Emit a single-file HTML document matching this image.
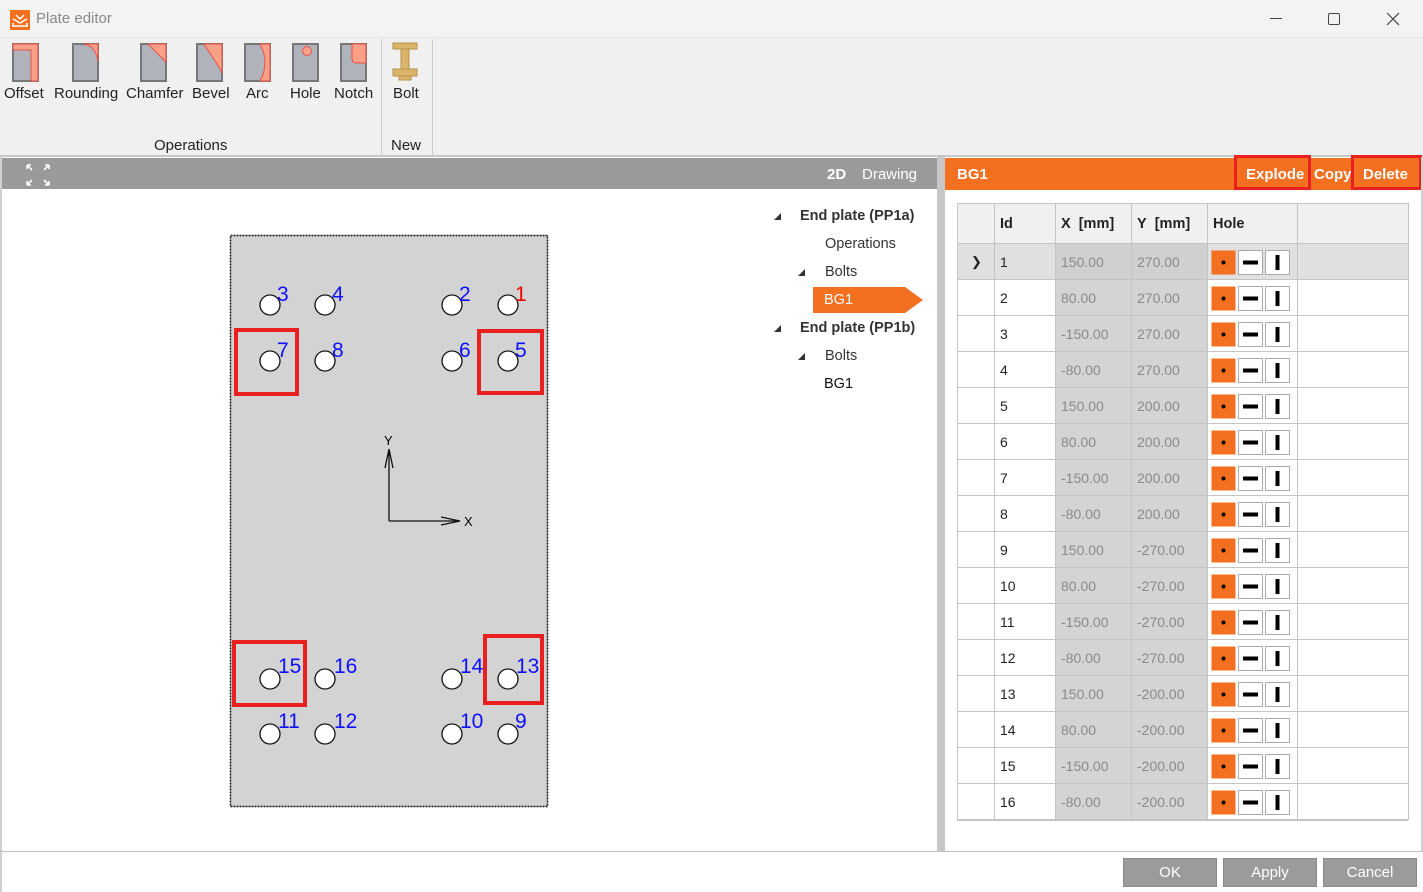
<!DOCTYPE html>
<html><head><meta charset="utf-8"><style>
*{margin:0;padding:0;box-sizing:border-box}
body{width:1423px;height:892px;overflow:hidden;background:#fff;font-family:"Liberation Sans",sans-serif;position:relative;font-size:14px;color:#222}
.a{position:absolute}
.tb{left:0;top:0;width:1423px;height:38px;background:#f3f3f3;border-bottom:1px solid #e4e4e4}
.rb{left:0;top:38px;width:1423px;height:119px;background:#f0f0f0;border-bottom:2px solid #c8c8c8}
.lbl{font-size:15px;color:#222;text-align:center}
table{border-collapse:collapse;position:absolute;left:957px;top:203px;table-layout:fixed}
td{border:1px solid #c4c4c4;height:36px;font-size:14px;padding-left:5px;color:#222}
td.g{background:#d4d4d4;color:#8a8a8a}
tr.h td{height:40px;font-weight:bold;background:#f0f0f0;font-size:14.5px}
tr.s td{background:#e0e0e0}
tr.s td.g{background:#d0d0d0}
.btn{top:858px;width:94px;height:29px;background:#9b9b9b;border:1px solid #8a8a8a;color:#fff;font-size:15px;text-align:center;line-height:28px}
</style></head><body>
<div class="a tb"></div>
<div class="a" style="left:10px;top:10px;width:20px;height:20px;background:#f37021"></div>
<svg class="a" style="left:10px;top:10px" width="20" height="20"><path d="M3 9 L10 13 L17 9 M3 13 V16 H17 V13 M6 5 L10 9 L14 5" stroke="#fff" stroke-width="1.5" fill="none"/></svg>
<div class="a" style="left:36px;top:10px;font-size:15px;color:#888">Plate editor</div>
<div class="a" style="left:1270px;top:18px;width:12px;height:1px;background:#444"></div>
<div class="a" style="left:1328px;top:13px;width:12px;height:12px;border:1px solid #444;border-radius:2px"></div>
<svg class="a" style="left:1386px;top:12px" width="14" height="14"><path d="M1 1L13 13M13 1L1 13" stroke="#444" stroke-width="1.2"/></svg>
<div class="a rb"></div>
<svg class="a" style="left:0;top:38px" width="440" height="60">
<g stroke="#777" stroke-width="2" fill="#b0b2bc">
<rect x="13" y="6" width="25" height="37"/><rect x="73" y="6" width="25" height="37"/><rect x="141" y="6" width="25" height="37"/><rect x="197" y="6" width="25" height="37"/><rect x="245" y="6" width="25" height="37"/><rect x="293" y="6" width="25" height="37"/><rect x="341" y="6" width="25" height="37"/></g>
<g fill="#f9a086" stroke="#e8534a" stroke-width="1">
<path d="M13 6H38V43H31V12H13Z"/><path d="M84 6H98V24Q96 8 84 6Z"/><path d="M148 6H166V24Z"/><path d="M204 6H222V34Z"/><path d="M260 6H270V43H260Q270 25 260 6Z"/><circle cx="307" cy="13" r="4.5"/><path d="M352 6H366V25H356Q352 25 352 20Z"/></g>
<g fill="#d9b46a" stroke="#b8944a"><rect x="393" y="5" width="24" height="6"/><rect x="401" y="11" width="8" height="22"/><rect x="393" y="31" width="24" height="7"/><rect x="399" y="38" width="12" height="4"/></g>
</svg>
<div class="a lbl" style="left:4px;top:85px">Offset</div>
<div class="a lbl" style="left:54px;top:85px">Rounding</div>
<div class="a lbl" style="left:126px;top:85px">Chamfer</div>
<div class="a lbl" style="left:192px;top:85px">Bevel</div>
<div class="a lbl" style="left:246px;top:85px">Arc</div>
<div class="a lbl" style="left:290px;top:85px">Hole</div>
<div class="a lbl" style="left:334px;top:85px">Notch</div>
<div class="a lbl" style="left:393px;top:85px">Bolt</div>
<div class="a" style="left:381px;top:39px;width:1px;height:117px;background:#ccc"></div>
<div class="a" style="left:432px;top:39px;width:1px;height:117px;background:#ccc"></div>
<div class="a lbl" style="left:154px;top:137px">Operations</div>
<div class="a lbl" style="left:391px;top:137px">New</div>
<div class="a" style="left:0;top:157px;width:2px;height:735px;background:#d0d0d0"></div>
<div class="a" style="left:2px;top:158px;width:935px;height:31px;background:#9a9a9a"></div>
<svg class="a" style="left:24px;top:162px" width="28" height="26"><g stroke="#fff" stroke-width="1.6" fill="none"><path d="M3 3L8 8M3 3H7M3 3V7M25 3L20 8M25 3H21M25 3V7M3 23L8 18M3 23H7M3 23V19M25 23L20 18M25 23H21M25 23V19"/></g></svg>
<div class="a" style="left:827px;top:166px;color:#fff;font-weight:bold;font-size:15px">2D</div>
<div class="a" style="left:862px;top:166px;color:#fff;font-size:15px">Drawing</div>
<div class="a" style="left:937px;top:157px;width:8px;height:694px;background:#c8c8c8"></div>
<svg class="a" style="left:0;top:0" width="940" height="850">
<rect x="230.5" y="235.5" width="317" height="571" fill="#d3d3d3" stroke="#111" stroke-width="1.5" stroke-dasharray="2 1"/>
<g fill="#fff" stroke="#111" stroke-width="1.3">
<circle cx="270" cy="305" r="10"/><circle cx="325" cy="305" r="10"/><circle cx="452" cy="305" r="10"/><circle cx="508" cy="305" r="10"/>
<circle cx="270" cy="361" r="10"/><circle cx="325" cy="361" r="10"/><circle cx="452" cy="361" r="10"/><circle cx="508" cy="361" r="10"/>
<circle cx="270" cy="679" r="10"/><circle cx="325" cy="679" r="10"/><circle cx="452" cy="679" r="10"/><circle cx="508" cy="679" r="10"/>
<circle cx="270" cy="734" r="10"/><circle cx="325" cy="734" r="10"/><circle cx="452" cy="734" r="10"/><circle cx="508" cy="734" r="10"/></g>
<g font-family="Liberation Sans,sans-serif" font-size="21" fill="#1010ff">
<text x="277" y="301">3</text><text x="332" y="301">4</text><text x="459" y="301">2</text><text x="515" y="301" fill="#f00000">1</text>
<text x="277" y="357">7</text><text x="332" y="357">8</text><text x="459" y="357">6</text><text x="515" y="357">5</text>
<text x="278" y="673">15</text><text x="334" y="673">16</text><text x="460" y="673">14</text><text x="516" y="673">13</text>
<text x="278" y="728">11</text><text x="334" y="728">12</text><text x="460" y="728">10</text><text x="515" y="728">9</text></g>
<g stroke="#111" stroke-width="1.3" fill="none"><path d="M389 521V449M385 468L389 449L393 468M389 521H460M441 517L460 521L441 525"/></g>
<text x="384" y="445" font-size="13" font-family="Liberation Sans,sans-serif">Y</text>
<text x="464" y="526" font-size="13" font-family="Liberation Sans,sans-serif">X</text>
<g fill="none" stroke="#e8201f" stroke-width="4"><rect x="236" y="330" width="61" height="64"/><rect x="479" y="331" width="63" height="62"/><rect x="234" y="642" width="71" height="63"/><rect x="485" y="636" width="57" height="67"/></g>
<g fill="#333"><path d="M774 220L781 213V220Z"/><path d="M798 276L805 269V276Z"/><path d="M774 332L781 325V332Z"/><path d="M798 360L805 353V360Z"/></g>
<path d="M813 287H905L923 300L905 313H813Z" fill="#f37021"/>
</svg>
<div class="a" style="left:800px;top:208px;font-weight:bold;font-size:14.5px;color:#333">End plate (PP1a)</div>
<div class="a" style="left:825px;top:236px;font-size:14.5px;color:#333">Operations</div>
<div class="a" style="left:825px;top:264px;font-size:14.5px;color:#333">Bolts</div>
<div class="a" style="left:824px;top:292px;font-size:14.5px;color:#fff">BG1</div>
<div class="a" style="left:800px;top:320px;font-weight:bold;font-size:14.5px;color:#333">End plate (PP1b)</div>
<div class="a" style="left:825px;top:348px;font-size:14.5px;color:#333">Bolts</div>
<div class="a" style="left:824px;top:376px;font-size:14.5px;color:#111">BG1</div>
<div class="a" style="left:945px;top:158px;width:476px;height:32px;background:#f37021"></div>
<div class="a" style="left:957px;top:166px;color:#fff;font-weight:bold;font-size:15px">BG1</div>
<div class="a" style="left:1234px;top:155px;width:77px;height:35px;border:3px solid #e8201f"></div>
<div class="a" style="left:1246px;top:166px;color:#fff;font-weight:bold;font-size:15px">Explode</div>
<div class="a" style="left:1314px;top:166px;color:#fff;font-weight:bold;font-size:15px">Copy</div>
<div class="a" style="left:1351px;top:155px;width:71px;height:35px;border:3px solid #e8201f"></div>
<div class="a" style="left:1363px;top:166px;color:#fff;font-weight:bold;font-size:15px">Delete</div>
<div class="a" style="left:1421px;top:157px;width:2px;height:694px;background:#d0d0d0"></div>
<table>
<colgroup><col style="width:37px"><col style="width:61px"><col style="width:76px"><col style="width:76px"><col style="width:90px"><col style="width:111px"></colgroup>
<tr class="h"><td></td><td>Id</td><td>X&nbsp; [mm]</td><td>Y&nbsp; [mm]</td><td>Hole</td><td></td></tr>
<tr class="s"><td style="padding-left:13px;font-size:13px">&#x276F;</td><td>1</td><td class="g">150.00</td><td class="g">270.00</td><td></td><td></td></tr>
<tr><td></td><td>2</td><td class="g">80.00</td><td class="g">270.00</td><td></td><td></td></tr>
<tr><td></td><td>3</td><td class="g">-150.00</td><td class="g">270.00</td><td></td><td></td></tr>
<tr><td></td><td>4</td><td class="g">-80.00</td><td class="g">270.00</td><td></td><td></td></tr>
<tr><td></td><td>5</td><td class="g">150.00</td><td class="g">200.00</td><td></td><td></td></tr>
<tr><td></td><td>6</td><td class="g">80.00</td><td class="g">200.00</td><td></td><td></td></tr>
<tr><td></td><td>7</td><td class="g">-150.00</td><td class="g">200.00</td><td></td><td></td></tr>
<tr><td></td><td>8</td><td class="g">-80.00</td><td class="g">200.00</td><td></td><td></td></tr>
<tr><td></td><td>9</td><td class="g">150.00</td><td class="g">-270.00</td><td></td><td></td></tr>
<tr><td></td><td>10</td><td class="g">80.00</td><td class="g">-270.00</td><td></td><td></td></tr>
<tr><td></td><td>11</td><td class="g">-150.00</td><td class="g">-270.00</td><td></td><td></td></tr>
<tr><td></td><td>12</td><td class="g">-80.00</td><td class="g">-270.00</td><td></td><td></td></tr>
<tr><td></td><td>13</td><td class="g">150.00</td><td class="g">-200.00</td><td></td><td></td></tr>
<tr><td></td><td>14</td><td class="g">80.00</td><td class="g">-200.00</td><td></td><td></td></tr>
<tr><td></td><td>15</td><td class="g">-150.00</td><td class="g">-200.00</td><td></td><td></td></tr>
<tr><td></td><td>16</td><td class="g">-80.00</td><td class="g">-200.00</td><td></td><td></td></tr>
</table>
<div class="a" style="left:957px;top:819px;width:451px;height:2px;background:#c4c4c4"></div>
<svg class="a" style="left:1211px;top:250px" width="80" height="570">
<defs><g id="hb"><rect x="0.5" y="0.5" width="24" height="24" fill="#f37021"/><circle cx="12.5" cy="12.5" r="2" fill="#000"/><rect x="27.5" y="0.5" width="24" height="24" fill="#fff" stroke="#aaa"/><rect x="32" y="10.5" width="15" height="4" fill="#000"/><rect x="54.5" y="0.5" width="24" height="24" fill="#fff" stroke="#aaa"/><rect x="64.5" y="5" width="4" height="15" fill="#000"/></g></defs>
<use href="#hb" y="0"/><use href="#hb" y="36"/><use href="#hb" y="72"/><use href="#hb" y="108"/><use href="#hb" y="144"/><use href="#hb" y="180"/><use href="#hb" y="216"/><use href="#hb" y="252"/><use href="#hb" y="288"/><use href="#hb" y="324"/><use href="#hb" y="360"/><use href="#hb" y="396"/><use href="#hb" y="432"/><use href="#hb" y="468"/><use href="#hb" y="504"/><use href="#hb" y="540"/>
</svg>
<div class="a" style="left:0;top:851px;width:1423px;height:1px;background:#c0c0c0"></div>
<div class="a btn" style="left:1123px">OK</div>
<div class="a btn" style="left:1223px">Apply</div>
<div class="a btn" style="left:1323px">Cancel</div>
</body></html>
